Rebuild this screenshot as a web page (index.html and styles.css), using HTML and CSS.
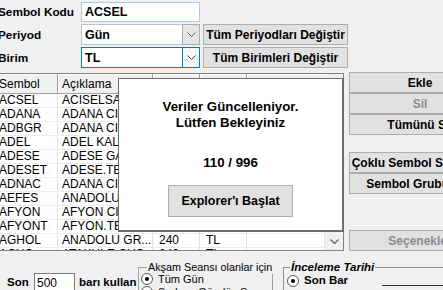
FILE: index.html
```html
<!DOCTYPE html>
<html>
<head>
<meta charset="utf-8">
<link rel="stylesheet" href="styles.css">
</head>
<body>
<div class="app">
  <div class="top">
    <div class="lbl">Sembol Kodu</div>
    <div class="field code">ACSEL</div>
    <div></div>
    <div class="lbl">Periyod</div>
    <div class="combo"><span class="val">Gün</span><span class="arrow"><svg width="9" height="5" viewBox="0 0 9 5"><path d="M0.5 0.5 L4.5 4.5 L8.5 0.5" fill="none" stroke="#606060"/></svg></span></div>
    <button class="btn">Tüm Periyodları Değiştir</button>
    <div class="lbl">Birim</div>
    <div class="combo focus"><span class="val">TL</span><span class="arrow"><svg width="9" height="5" viewBox="0 0 9 5"><path d="M0.5 0.5 L4.5 4.5 L8.5 0.5" fill="none" stroke="#404040"/></svg></span></div>
    <button class="btn">Tüm Birimleri Değiştir</button>
  </div>

  <div class="middle">
    <div class="list">
      <div class="grid">
        <div class="hd c1">Sembol</div><div class="hd c2">Açıklama</div><div class="hd c3"></div><div class="hd c4"></div><div class="hd c5"></div>
        <div class="cell c1">ACSEL</div><div class="cell c2">ACISELSAN ACIPAYAM</div><div class="cell c3">240</div><div class="cell c4">TL</div><div class="cell c5"></div>
        <div class="cell c1">ADANA</div><div class="cell c2">ADANA CIMENTO (A)</div><div class="cell c3">240</div><div class="cell c4">TL</div><div class="cell c5"></div>
        <div class="cell c1">ADBGR</div><div class="cell c2">ADANA CIMENTO (B)</div><div class="cell c3">240</div><div class="cell c4">TL</div><div class="cell c5"></div>
        <div class="cell c1">ADEL</div><div class="cell c2">ADEL KALEMCILIK</div><div class="cell c3">240</div><div class="cell c4">TL</div><div class="cell c5"></div>
        <div class="cell c1">ADESE</div><div class="cell c2">ADESE GAYRIMENKUL</div><div class="cell c3">240</div><div class="cell c4">TL</div><div class="cell c5"></div>
        <div class="cell c1">ADESET</div><div class="cell c2">ADESE.TEMETTU</div><div class="cell c3">240</div><div class="cell c4">TL</div><div class="cell c5"></div>
        <div class="cell c1">ADNAC</div><div class="cell c2">ADANA CIMENTO (C)</div><div class="cell c3">240</div><div class="cell c4">TL</div><div class="cell c5"></div>
        <div class="cell c1">AEFES</div><div class="cell c2">ANADOLU EFES</div><div class="cell c3">240</div><div class="cell c4">TL</div><div class="cell c5"></div>
        <div class="cell c1">AFYON</div><div class="cell c2">AFYON CIMENTO</div><div class="cell c3">240</div><div class="cell c4">TL</div><div class="cell c5"></div>
        <div class="cell c1">AFYONT</div><div class="cell c2">AFYON.TEMETTU</div><div class="cell c3">240</div><div class="cell c4">TL</div><div class="cell c5"></div>
        <div class="cell c1">AGHOL</div><div class="cell c2">ANADOLU GR...</div><div class="cell c3">240</div><div class="cell c4">TL</div><div class="cell c5"></div>
        <div class="cell c1">AGYO</div><div class="cell c2">ATAKULE GYO</div><div class="cell c3">240</div><div class="cell c4">TL</div><div class="cell c5"></div>
      </div>
      <div class="vscroll">
        <span class="sarrow"><svg width="9" height="5" viewBox="0 0 9 5"><path d="M0.5 0.5 L4.5 4.5 L8.5 0.5" fill="none" stroke="#606060" stroke-width="1.2"/></svg></span>
      </div>
      <div class="dialog">
        <div class="msg">Veriler Güncelleniyor.<br>Lütfen Bekleyiniz</div>
        <div class="count">110 / 996</div>
        <button class="dbtn">Explorer'ı Başlat</button>
      </div>
    </div>
    <div class="side">
      <button class="sbtn">Ekle</button>
      <button class="sbtn dis">Sil</button>
      <button class="sbtn">Tümünü Sil</button>
      <button class="sbtn gap1">Çoklu Sembol Seçimleri</button>
      <button class="sbtn">Sembol Grubu Seç</button>
      <button class="sbtn dis gap2">Seçenekler</button>
    </div>
  </div>

  <div class="bottom">
    <div class="blbl son">Son</div>
    <div class="num">500</div>
    <div class="blbl kul">barı kullan</div>
    <fieldset class="grp g1">
      <legend>Akşam Seansı olanlar için</legend>
      <div class="ropt r1"><span class="radio on"></span><span>Tüm Gün</span></div>
      <div class="ropt"><span class="radio"></span><span>Sadece Gündüz Seansı</span></div>
    </fieldset>
    <fieldset class="grp g2">
      <legend>İnceleme Tarihi</legend>
      <div class="ropt r2"><span class="radio on"></span><span class="bold">Son Bar</span><span class="datebox"></span></div>
    </fieldset>
  </div>
</div>
</body>
</html>
```

FILE: styles.css
```css
html, body {
  margin: 0;
  padding: 0;
}
body {
  background: #f0f0f0;
  font-family: "Liberation Sans", Arial, sans-serif;
  color: #000;
  width: 443px;
  height: 290px;
  overflow: hidden;
}
.app {
  width: 443px;
}

/* top form */
.top {
  display: grid;
  grid-template-columns: 82px 119px 145px;
  grid-template-rows: 20px 21px 21px;
  column-gap: 3px;
  row-gap: 2px;
  padding-top: 2px;
  margin-left: -4px;
}
.lbl {
  font-weight: bold;
  font-size: 11.8px;
  padding-left: 2px;
  display: flex;
  align-items: center;
  white-space: nowrap;
}
.field {
  background: #fff;
  border: 1px solid #a6caee;
  box-sizing: border-box;
  display: flex;
  align-items: center;
  padding-left: 3px;
  font-weight: bold;
  font-size: 12.5px;
}
.combo {
  background: #fff;
  border: 1px solid #c4c4c4;
  box-sizing: border-box;
  display: flex;
  align-items: stretch;
  font-weight: bold;
  font-size: 12.5px;
}
.combo .val {
  flex: 1;
  display: flex;
  align-items: center;
  padding-left: 3px;
}
.combo .arrow {
  width: 16px;
  display: flex;
  align-items: center;
  justify-content: center;
  background: #e5e5e5;
  border: 1px solid #adadad;
  margin: -1px -1px -1px 0;
}
.combo.focus {
  border-color: #0078d7;
}
.combo.focus .arrow {
  background: #f4f8fc;
  border-color: #0078d7;
}
.btn {
  font-family: "Liberation Sans", Arial, sans-serif;
  font-weight: bold;
  font-size: 12px;
  background: #e1e1e1;
  border: 1px solid #adadad;
  color: #000;
  padding: 0;
  margin: 0;
  white-space: nowrap;
}

/* middle */
.middle {
  display: flex;
  margin-top: 5px;
  height: 178px;
}
.list {
  position: relative;
  margin-left: -4px;
  width: 348px;
  height: 178px;
  box-sizing: border-box;
  border: 1px solid #828282;
  background: #fff;
  display: flex;
  flex-shrink: 0;
}
.grid {
  display: grid;
  grid-template-columns: 61px 95px 47px 47px 78px;
  grid-template-rows: 20px;
  grid-auto-rows: 14px;
  width: 328px;
  overflow: hidden;
  font-size: 12px;
}
.hd {
  background: #f0f0f0;
  border-right: 1px solid #a0a0a0;
  border-bottom: 1px solid #a0a0a0;
  box-shadow: inset 1px 1px 0 #fff;
  display: flex;
  align-items: center;
  white-space: nowrap;
  overflow: hidden;
  padding-top: 1px;
}
.hd.c5 {
  border-right: none;
}
.cell {
  border-right: 1px solid #e2e2e2;
  border-bottom: 1px solid #ececec;
  line-height: 13px;
  white-space: nowrap;
  overflow: hidden;
  text-overflow: clip;
}
.c1 { padding-left: 2px; }
.c2 { padding-left: 4px; }
.c3 { padding-left: 6px; }
.c4 { padding-left: 6px; }
.vscroll {
  width: 18px;
  background: #f0f0f0;
  display: flex;
  flex-direction: column;
  justify-content: flex-end;
}
.sarrow {
  height: 17px;
  display: flex;
  align-items: center;
  justify-content: center;
}

.dialog {
  position: absolute;
  left: 121px;
  top: 4px;
  width: 226px;
  height: 154px;
  box-sizing: border-box;
  background: #fff;
  border: 1px solid #6e6e6e;
  border-right-width: 2px;
  border-bottom-width: 2px;
  display: flex;
  flex-direction: column;
  align-items: center;
  padding-top: 20px;
  font-weight: bold;
  font-size: 13.3px;
  line-height: 16px;
  text-align: center;
}
.count {
  margin-top: 24px;
}
.dbtn {
  margin-top: 14px;
  width: 125px;
  height: 32px;
  background: #e1e1e1;
  border: 1px solid #adadad;
  font-family: "Liberation Sans", Arial, sans-serif;
  font-weight: bold;
  font-size: 12.5px;
  color: #000;
  padding: 0;
}

.side {
  display: flex;
  flex-direction: column;
  margin-left: 5px;
  margin-top: -1px;
  width: 142px;
  flex-shrink: 0;
}
.sbtn {
  height: 21px;
  margin: 0;
  padding: 0;
  background: #e1e1e1;
  border: 1px solid #adadad;
  font-family: "Liberation Sans", Arial, sans-serif;
  font-weight: bold;
  font-size: 12px;
  color: #000;
  white-space: nowrap;
  overflow: hidden;
}
.sbtn.dis {
  color: #8c8c8c;
}
.sbtn.gap1 { margin-top: 17px; }
.sbtn.gap2 { margin-top: 36px; }

/* bottom */
.bottom {
  display: flex;
  align-items: flex-start;
  margin-top: 10px;
  padding-left: 7px;
}
.bottom > * {
  flex-shrink: 0;
}
.blbl {
  font-weight: bold;
  font-size: 11.5px;
  line-height: 15px;
  margin-top: 14px;
  white-space: nowrap;
}
.son {
  width: 27px;
}
.kul {
  width: 55px;
}
.num {
  margin-top: 12px;
  margin-right: 4px;
  width: 41px;
  height: 20px;
  box-sizing: border-box;
  background: #fff;
  border: 1px solid #7a7a7a;
  font-size: 12px;
  padding: 2px 0 0 2px;
}
.grp {
  margin: 0;
  padding: 0 2px;
  border: 1px solid #a0a0a0;
  min-width: 0;
  height: 40px;
  box-sizing: border-box;
}
.grp legend {
  padding: 0 1px;
  line-height: 13px;
  white-space: nowrap;
}
.g1 {
  margin-left: 4px;
  width: 135px;
}
.g1 legend {
  margin-left: 6px;
  font-size: 10.8px;
}
.g2 {
  margin-left: 10px;
  width: 200px;
  padding-left: 3px;
  border-color: #909090;
}
.g2 legend {
  margin-left: 3px;
  font-size: 11.5px;
  font-weight: bold;
  font-style: italic;
}
.ropt {
  display: flex;
  align-items: center;
  height: 13px;
  font-size: 11px;
  white-space: nowrap;
}
.ropt.r1 {
  margin-top: -2px;
}
.ropt.r2 {
  margin-top: 0;
  font-size: 11.5px;
  align-items: flex-start;
}
.ropt.r2 .radio { margin-top: 1px; }
.bold { font-weight: bold; line-height: 13px; }
.radio {
  width: 12px;
  height: 12px;
  box-sizing: border-box;
  border-radius: 50%;
  background: #fff;
  border: 1px solid #555;
  position: relative;
  flex-shrink: 0;
  margin-right: 5px;
}
.radio.on::after {
  content: "";
  position: absolute;
  left: 3px;
  top: 3px;
  width: 4px;
  height: 4px;
  border-radius: 50%;
  background: #000;
}
.datebox {
  width: 80px;
  height: 10px;
  margin-left: 34px;
  margin-top: 11px;
  border-top: 1px solid #333;
  flex-shrink: 0;
}
```
